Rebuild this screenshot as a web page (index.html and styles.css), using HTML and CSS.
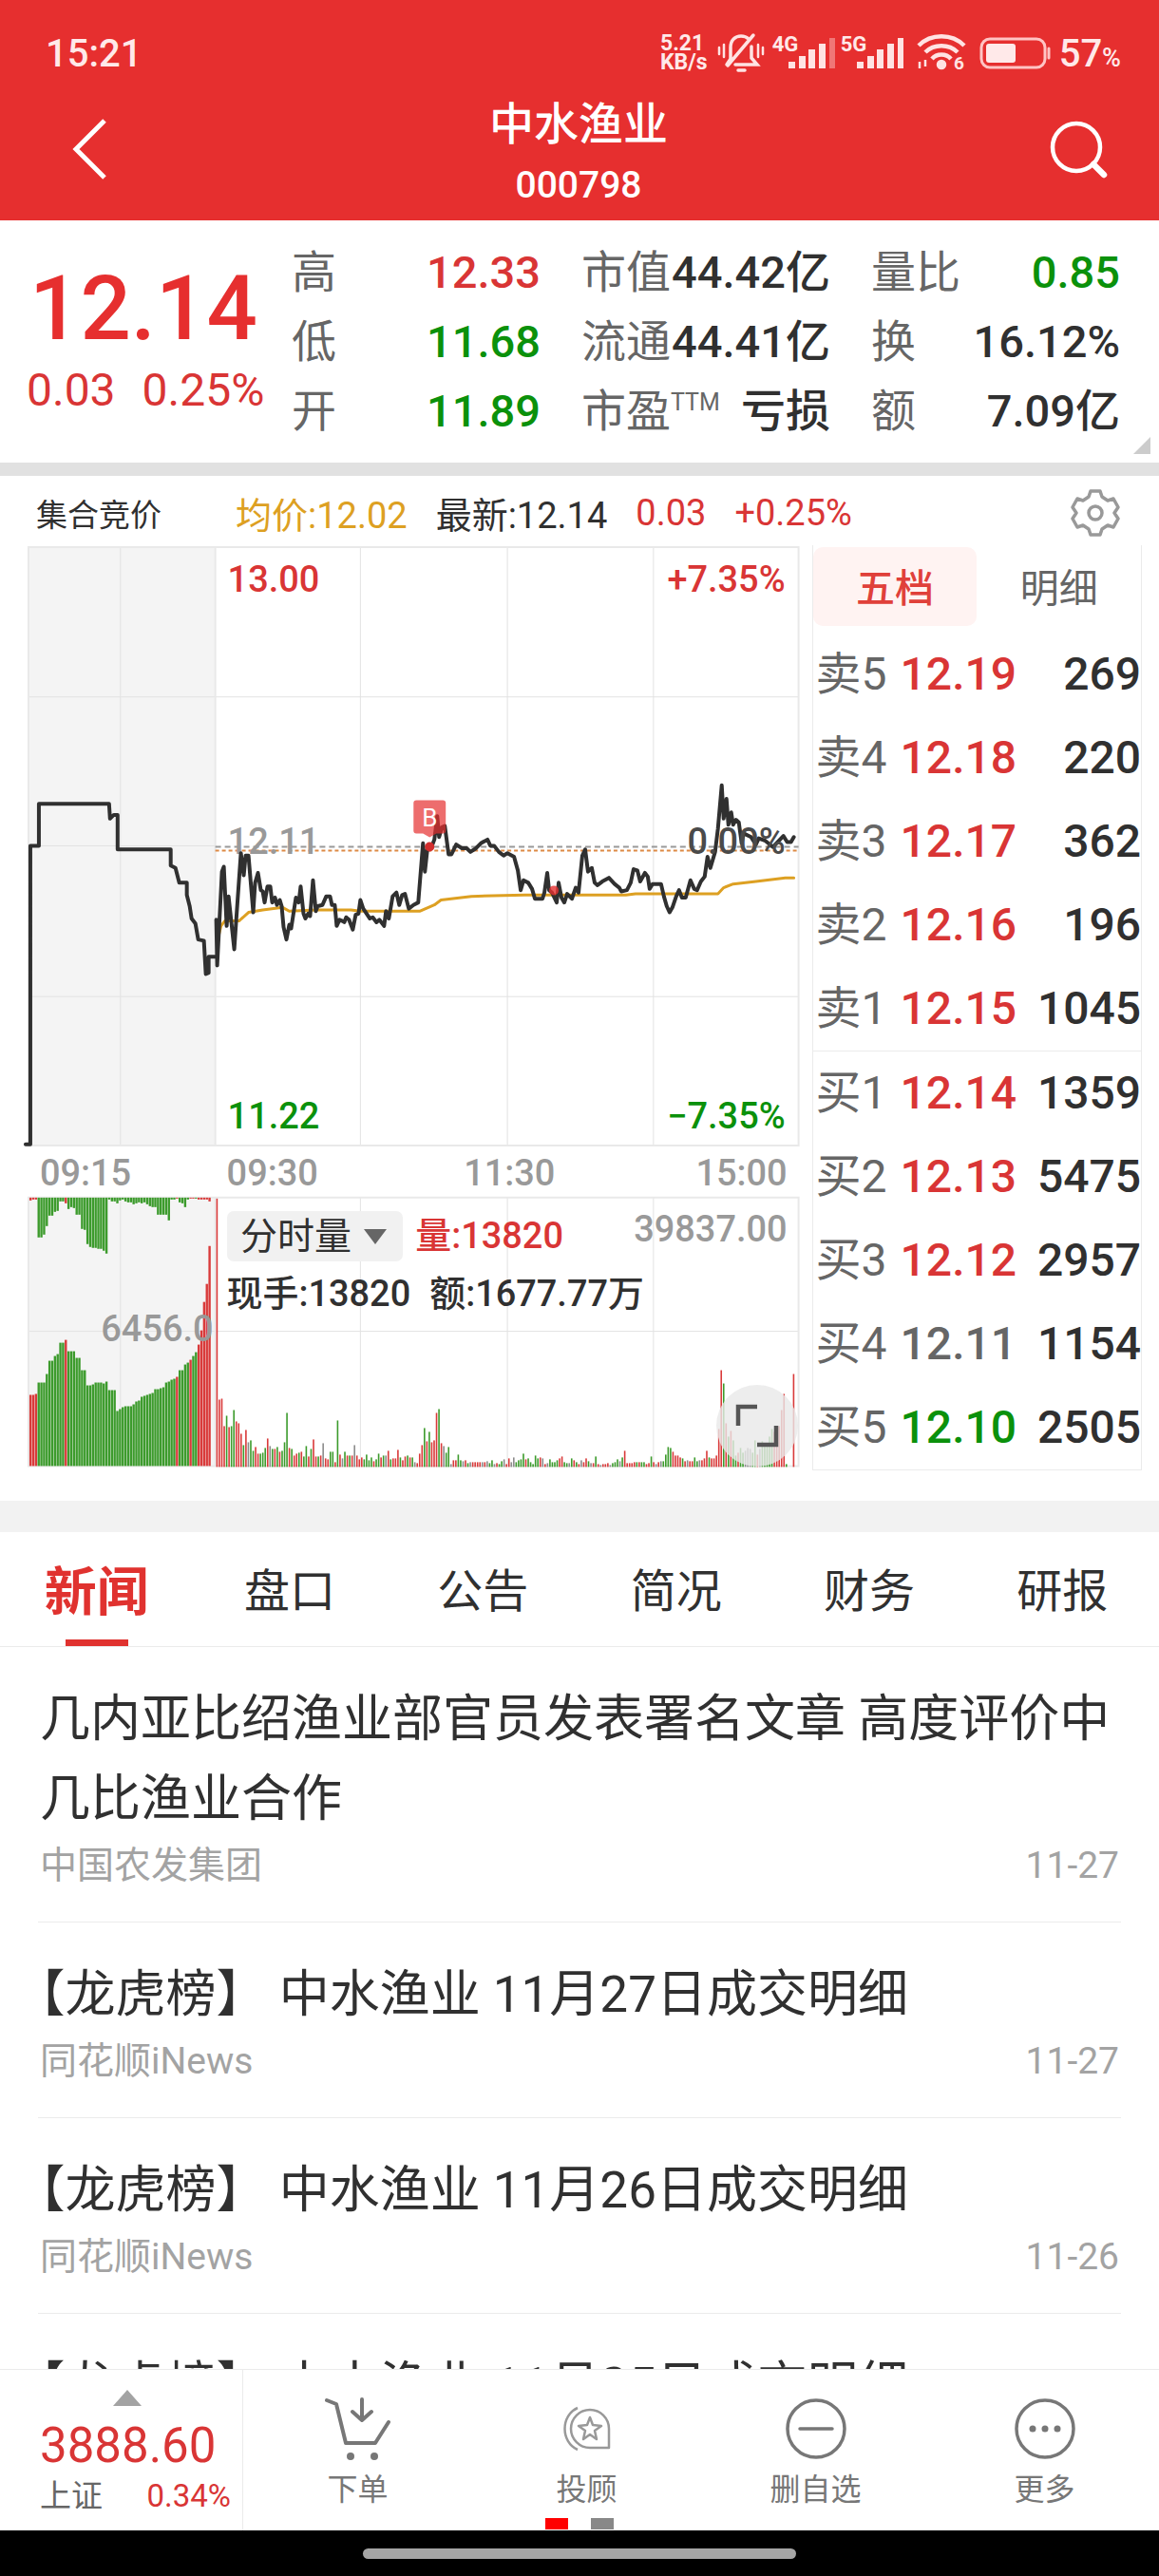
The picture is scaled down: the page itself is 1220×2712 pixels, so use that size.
FILE: index.html
```
<!DOCTYPE html>
<html lang="zh-CN">
<head>
  <meta charset="UTF-8">
  <meta name="viewport" content="width=device-width, initial-scale=1.0">
  <title>中水渔业 000798</title>
  <link rel="stylesheet" href="styles.css">
</head>
<body>
  <header class="topbar">
    <div class="status">
      <span class="clock">15:21</span>
      <div class="status-icons">
        <span class="speed">5.21<br>KB/s</span>
        <svg width="50" height="46" viewBox="0 0 50 46" fill="none" stroke="#ffe3e3" stroke-width="3.5" stroke-linecap="round">
          <path d="M10 35L14 29V17C14 9 19 5 25 5C28 5 31 6 33 8M36 16V28L42 35H19M22 41H29M38 4L11 36"/>
          <path d="M7 14V27M2 17V24M43 14V27M48 17V24" stroke-width="2.5"/>
        </svg>
        <div class="signal">
          <span>4G</span>
          <svg width="50" height="34" viewBox="0 0 50 34" fill="#ffe3e3">
            <rect x="0" y="26" width="7" height="7"/><rect x="11" y="20" width="7" height="13"/><rect x="21" y="13" width="7" height="20"/><rect x="32" y="7" width="7" height="26"/><rect x="43" y="1" width="6" height="32" opacity=".4"/>
          </svg>
        </div>
        <div class="signal">
          <span>5G</span>
          <svg width="50" height="34" viewBox="0 0 50 34" fill="#ffe3e3">
            <rect x="0" y="26" width="7" height="7"/><rect x="11" y="20" width="7" height="13"/><rect x="21" y="13" width="7" height="20"/><rect x="32" y="7" width="7" height="26"/><rect x="43" y="1" width="6" height="32"/>
          </svg>
        </div>
        <svg class="wifi" width="52" height="42" viewBox="0 0 52 42" fill="none" stroke="#ffe3e3" stroke-width="4.5">
          <path d="M2 13C15 0 37 0 50 13M9 20C18 11 34 11 43 20M16 27C21 21 31 21 36 27"/>
          <circle cx="26" cy="33" r="3" fill="#ffe3e3"/>
          <path d="M3 30V37M9 28V35" stroke-width="2.5"/>
          <text x="39" y="38" class="wifi-num">6</text>
        </svg>
        <svg class="battery" width="76" height="34" viewBox="0 0 76 34">
          <rect x="2" y="2" width="67" height="30" rx="9" fill="none" stroke="#ffc4c4" stroke-width="3"/>
          <rect x="7" y="7" width="31" height="20" rx="3" fill="#ffe9e9"/>
          <path d="M73 12V22" stroke="#ffc4c4" stroke-width="3" stroke-linecap="round"/>
        </svg>
        <span class="percent">57<small>%</small></span>
      </div>
    </div>
    <nav class="nav">
      <button class="nav-btn" aria-label="返回">
        <svg width="40" height="68" viewBox="0 0 40 68" fill="none" stroke="#fff" stroke-width="5"><path d="M35 4L5 34L35 64"/></svg>
      </button>
      <h1 class="stock">中水渔业<span>000798</span></h1>
      <button class="nav-btn right" aria-label="搜索">
        <svg width="64" height="64" viewBox="0 0 64 64" fill="none" stroke="#fff" stroke-width="4.5" stroke-linecap="round"><circle cx="30" cy="30" r="25"/><path d="M48 48L59 59" stroke-width="6.5"/></svg>
      </button>
    </nav>
  </header>

  <section class="quote">
    <div class="price">
      <div class="last">12.14</div>
      <div class="change"><span>0.03</span><span>0.25%</span></div>
    </div>
    <dl class="stats">
      <div><dt>高</dt><dd class="up">12.33</dd></div>
      <div><dt>市值</dt><dd>44.42亿</dd></div>
      <div><dt>量比</dt><dd class="down">0.85</dd></div>
      <div><dt>低</dt><dd class="down">11.68</dd></div>
      <div><dt>流通</dt><dd>44.41亿</dd></div>
      <div><dt>换</dt><dd>16.12%</dd></div>
      <div><dt>开</dt><dd class="down">11.89</dd></div>
      <div><dt>市盈<sup>TTM</sup></dt><dd>亏损</dd></div>
      <div><dt>额</dt><dd>7.09亿</dd></div>
    </dl>
    <i class="corner"></i>
  </section>

  <div class="legend">
    <span class="auction">集合竞价</span>
    <span class="avg">均价:12.02</span>
    <span>最新:12.14</span>
    <span class="up">0.03</span>
    <span class="up">+0.25%</span>
    <button class="gear" aria-label="设置">
      <svg width="52" height="52" viewBox="0 0 52 52" fill="none" stroke="#999" stroke-width="3.5" stroke-linejoin="round">
        <path d="M21 3H31L33 9L39 13L45 11L50 20L46 26L50 32L45 41L39 39L33 43L31 49H21L19 43L13 39L7 41L2 32L6 26L2 20L7 11L13 13L19 9Z"/>
        <circle cx="26" cy="26" r="7"/>
      </svg>
    </button>
  </div>

  <main class="board">
    <div class="chart">
      <svg viewBox="0 574 856 974">
        <!-- auction background -->
        <rect x="30" y="576" width="197" height="631" fill="#f4f4f4"/>
        <rect x="30" y="1262" width="197" height="283" fill="#f4f4f4"/>
        <!-- grid -->
        <path class="grid" d="M127 576V1207M380 576V1207M535 576V1207M689 576V1207M30 734H842M30 891H227M30 1050H842"/>
        <path class="grid" d="M127 1262V1545M380 1262V1545M535 1262V1545M689 1262V1545M30 1403H842"/>
        <path class="frame" d="M30 576H842V1207H30ZM227 576V1207M30 1262H842V1545H30ZM227 1262V1545"/>
        <path class="base" d="M227 892H842"/>
        <path class="base orange" d="M227 896H842"/>

        <text class="num mid" x="240" y="900">12.11</text>

        <g class="lines" transform="translate(0 -172) scale(1 1.301)">
          <polyline class="avg-line" points="229,895 233,882 237,878 252,878 262,871 277,869 298,867 305,870 333,869 370,869 380,870 443,870 458,865 465,861 497,858 553,857 660,857 670,856 757,856 763,851 773,848 797,846 828,843 837,843"/>
          <polyline points="27,1059 32,1059 32,817 41,817 41,783 115,783 116,795 120,792 124,792 124,820 180,820 180,833 185,835 189,847 197,847 197,857 200,866 202,876 206,880 209,893 215,894 217,921 220,920 220,907 227,907"/>
          <polyline points="228,877 229,914 234,838 236,834 239,882 241,858 247,901 249,878 254,823 257,841 259,825 262,825 267,871 269,847 272,839 275,853 277,854 279,863 282,850 285,850 287,863 290,859 292,865 295,861 297,866 299,883 302,893 305,881 307,884 312,859 315,863 317,850 320,872 322,876 325,872 327,874 330,845 333,870 335,866 340,865 344,858 348,858 350,865 353,865 355,882 358,877 361,878 363,879 365,875 368,877 372,885 375,873 378,872 380,861 383,868 390,876 393,875 397,879 400,877 405,882 407,870 410,876 414,858 418,855 421,865 424,857 427,856 431,868 436,865 441,863 446,815 448,838 451,817 455,818 458,812 461,793 463,810 466,802 469,801 473,824 476,824 481,816 487,819 492,819 496,822 502,819 507,815 514,812 517,817 521,817 526,822 531,825 535,823 542,826 546,837 549,853 552,845 557,847 561,852 564,860 568,860 572,860 574,855 577,839 579,853 582,855 587,863 589,847 592,859 595,863 598,856 603,860 607,851 610,855 614,825 617,820 620,838 624,835 627,847 630,849 635,846 642,843 648,848 653,851 655,854 661,853 665,847 668,836 672,837 675,846 680,839 683,842 685,852 688,848 697,848 700,858 703,866 706,871 709,867 713,858 716,853 719,859 723,859 728,845 732,852 735,853 739,846 743,842 746,826 749,835 754,822 757,803 761,768 763,795 766,779 768,800 771,790 773,800 776,796 779,798 782,815 784,807 792,810 797,816 800,811 807,813 815,818 820,814 826,809 830,814 834,814 837,810"/>
        </g>

        <!-- buy marker -->
        <path d="M439 843H467Q470 843 470 846V875Q470 878 467 878H460L453 882L446 878H439Q436 878 436 875V846Q436 843 439 843Z" fill="#e62f2f" fill-opacity=".7"/>
        <text class="buy" x="453" y="870">B</text>
        <circle cx="453" cy="892" r="5" fill="#d22e2e"/>
        <circle cx="584" cy="938" r="5" fill="#e62f2f" fill-opacity=".8"/>

        <text class="num red" x="240" y="623">13.00</text>
        <text class="num green" x="240" y="1189">11.22</text>
        <text class="num red end" x="828" y="623">+7.35%</text>
        <text class="num dark end" x="828" y="900">0.00%</text>
        <text class="num green end" x="828" y="1189">−7.35%</text>
        <text class="num" x="42" y="1249">09:15</text>
        <text class="num" x="239" y="1249">09:30</text>
        <text class="num" x="489" y="1249">11:30</text>
        <text class="num end" x="830" y="1249">15:00</text>

        <g id="auctionBars"></g>
        <g id="volumeBars"></g>

        <text class="num end" x="830" y="1308">39837.00</text>
        <text class="num end" x="225" y="1413">6456.0</text>
        <text class="num red" x="438" y="1315">量:13820</text>
        <text class="num black" x="239" y="1376">现手:13820</text>
        <text class="num black" x="453" y="1376">额:1677.77万</text>
      </svg>
      <div class="indicator">
        <select aria-label="指标"><option>分时量</option></select>
      </div>
      <button class="expand" aria-label="全屏">
        <svg width="48" height="48" viewBox="0 0 48 48" fill="none" stroke="#555" stroke-width="4.5"><path d="M4 24V4H24M44 24V44H24"/></svg>
      </button>
    </div>

    <div class="orders">
      <div class="order-tabs">
        <button class="active">五档</button>
        <button>明细</button>
      </div>
      <table>
        <tbody>
          <tr><th>卖5</th><td class="up">12.19</td><td>269</td></tr>
          <tr><th>卖4</th><td class="up">12.18</td><td>220</td></tr>
          <tr><th>卖3</th><td class="up">12.17</td><td>362</td></tr>
          <tr><th>卖2</th><td class="up">12.16</td><td>196</td></tr>
          <tr><th>卖1</th><td class="up">12.15</td><td>1045</td></tr>
        </tbody>
        <tbody class="bids">
          <tr><th>买1</th><td class="up">12.14</td><td>1359</td></tr>
          <tr><th>买2</th><td class="up">12.13</td><td>5475</td></tr>
          <tr><th>买3</th><td class="up">12.12</td><td>2957</td></tr>
          <tr><th>买4</th><td class="flat">12.11</td><td>1154</td></tr>
          <tr><th>买5</th><td class="down">12.10</td><td>2505</td></tr>
        </tbody>
      </table>
    </div>
  </main>

  <nav class="tabs">
    <a href="#" class="active">新闻</a>
    <a href="#">盘口</a>
    <a href="#">公告</a>
    <a href="#">简况</a>
    <a href="#">财务</a>
    <a href="#">研报</a>
  </nav>

  <section class="news">
    <article>
      <h2>几内亚比绍渔业部官员发表署名文章 高度评价中几比渔业合作</h2>
      <p><span>中国农发集团</span><time>11-27</time></p>
    </article>
    <article>
      <h2>【龙虎榜】 中水渔业 11月27日成交明细</h2>
      <p><span>同花顺iNews</span><time>11-27</time></p>
    </article>
    <article>
      <h2>【龙虎榜】 中水渔业 11月26日成交明细</h2>
      <p><span>同花顺iNews</span><time>11-26</time></p>
    </article>
    <article>
      <h2>【龙虎榜】 中水渔业 11月25日成交明细</h2>
    </article>
  </section>

  <footer class="toolbar">
    <div class="index">
      <i class="arrow"></i>
      <strong>3888.60</strong>
      <div><span>上证</span><span class="up">0.34%</span></div>
    </div>
    <button>
      <svg width="72" height="68" viewBox="0 0 72 68" fill="none" stroke="#777" stroke-width="4" stroke-linecap="round" stroke-linejoin="round">
        <path d="M3 4L13 8L23 49H54L68 27M40 3V25M30 16L40 25L50 16"/>
        <circle cx="28" cy="63" r="4" fill="#777" stroke="none"/><circle cx="53" cy="63" r="4" fill="#777" stroke="none"/>
      </svg>
      下单
    </button>
    <button>
      <svg width="72" height="68" viewBox="0 0 72 68" fill="none" stroke="#999" stroke-width="2.5" stroke-linejoin="round">
        <path d="M39 14C28 14 19 23 19 34S28 54 39 54H59V34C59 23 50 14 39 14Z"/>
        <path d="M26 12C8 20 8 48 26 56"/>
        <path d="M39 22L42 30L51 31L44 36L46 45L39 40L32 45L34 36L27 31L36 30Z"/>
      </svg>
      投顾
    </button>
    <button>
      <svg width="72" height="68" viewBox="0 0 72 68" fill="none" stroke="#777" stroke-width="3.5" stroke-linecap="round"><circle cx="36" cy="34" r="30"/><path d="M19 34H53"/></svg>
      删自选
    </button>
    <button>
      <svg width="72" height="68" viewBox="0 0 72 68" fill="#777"><circle cx="36" cy="34" r="30" fill="none" stroke="#777" stroke-width="3.5"/><circle cx="23" cy="34" r="3.5"/><circle cx="36" cy="34" r="3.5"/><circle cx="49" cy="34" r="3.5"/></svg>
      更多
    </button>
    <div class="pager"><i class="on"></i><i></i></div>
  </footer>
  <div class="gesture"><i></i></div>

  <script>
const SVG = "http://www.w3.org/2000/svg";
const COLORS = { r: "#d93a3a", g: "#3c9b2c", x: "#8c8c8c" };

function addBar(group, x, y, width, height, color) {
  const bar = document.createElementNS(SVG, "rect");
  bar.setAttribute("x", x);
  bar.setAttribute("y", y);
  bar.setAttribute("width", width);
  bar.setAttribute("height", height);
  bar.setAttribute("fill", color);
  group.appendChild(bar);
}

// call auction: matched volume grows up, unmatched volume hangs down
const matched = "r75 r75 r76 g88 g88 g88 g97 g111 g111 g116 g118 g130 g130 r133 g121 g121 g121 g114 g114 g101 g101 g85 g85 g86 g88 g88 g88 g87 g89 g80 g80 g80 g58 g60 g62 g63 g63 g63 g65 g68 g69 g73 g74 g75 g76 g77 g81 g81 g82 g83 g88 g89 g91 g92 r94 g101 g101 g107 g109 r112 g116 g120 r128 r143 r173 r192 r232";
const unmatched = "r3 r2 r2 g42 g42 g39 g30 g19 g19 g15 g14 g4 g4 r6 g12 g10 g11 g18 g18 g33 g34 g49 g52 g53 g53 g54 g54 g56 g59 g2 g4 g4 g6 g3 g2 g4 g5 g5 g7 g6 g5 g6 g5 g7 g9 g10 g10 g18 g18 g18 g18 g24 g2 g2 r1 g5 g6 g10 g2 r1 r1 g1 r2 r2 r2 r2 r4";
const auctionBars = document.getElementById("auctionBars");
matched.split(" ").forEach((item, i) => {
  const h = Number(item.slice(1));
  addBar(auctionBars, 31 + i * 2.86, 1545 - h, 2.4, h, COLORS[item[0]]);
});
unmatched.split(" ").forEach((item, i) => {
  addBar(auctionBars, 31 + i * 2.86, 1262, 2.4, Number(item.slice(1)), COLORS[item[0]]);
});

// minute volume, 09:30 - 15:00
const volume = "r283 r71 r72 r43 g54 r42 g43 g60 r48 r46 r35 g23 r39 x26 g28 g17 r21 r14 g14 g15 g20 r30 x22 g19 r19 g21 r16 g17 g26 g57 r20 g19 r12 r14 g15 r16 g11 g22 r11 g19 r29 r11 g11 r12 x25 r9 r8 g16 g16 r5 g49 r13 x9 g16 r12 g12 r12 x23 r12 r8 r10 g8 g13 g7 g10 r6 g8 g14 r10 g12 x12 r17 g8 r9 r9 r18 g10 r7 r11 g12 r10 g10 x5 r4 "
  + "r14 r23 g41 r27 g37 r26 r28 r57 g61 r25 x22 g15 g21 x3 r7 r7 g13 g7 x6 r7 g4 x5 r5 r5 r5 r5 x5 r5 x6 g4 g7 x3 r4 g3 g6 x8 r3 r9 x5 x10 g5 g7 g8 g14 r8 g9 g5 g3 g12 g9 r10 x9 r3 x4 g8 g5 g5 g7 r9 r11 g5 g4 x4 g9 r7 g5 r3 x7 r5 r9 g6 x4 r4 g11 r3 x2 r3 r3 r4 x2 g4 g5 g8 x6 g10 r17 r4 r4 r4 r5 g5 r5 g5 g5 r3 r4 g11 r5 x3 r5 x6 g6 g13 g21 g20 r16 r12 r12 r10 g9 r6 x7 r6 r6 g10 g6 x7 r7 r9 r17 g10 r9 r9 r12 r40 r102 g88 r46 g32 r38 g28 g12 r15 g20 g15 x17 x20 x19 g15 g28 r13 x19 g27 g23 g25 g32 g40 r37 r33 r43 r60 r77 g3 x0 x0 r98";
const volumeBars = document.getElementById("volumeBars");
const minutes = volume.trim().split(" ");
const step = (836 - 228) / (minutes.length - 1);
minutes.forEach((item, i) => {
  const h = Number(item.slice(1));
  addBar(volumeBars, 228 + i * step, 1546 - h, 1.6, h, COLORS[item[0]]);
});
  </script>
</body>
</html>
```
FILE: styles.css
```
* {
  box-sizing: border-box;
}

body {
  display: flex;
  flex-direction: column;
  height: 100vh;
  margin: 0;
  overflow: hidden;
  background: #fff;
  color: #303030;
  font-family: Roboto, "Noto Sans CJK SC", sans-serif;
}

h1, h2, p, dl, dt, dd {
  margin: 0;
  font-weight: 400;
}

button {
  border: none;
  padding: 0;
  background: none;
  font-family: inherit;
  color: inherit;
}

svg {
  display: block;
}

.up {
  color: #d93535;
}

.down {
  color: #0b910b;
}

.flat {
  color: #666;
}

/* header */
.topbar {
  background: #e62f2f;
  color: #fff;
  padding-bottom: 4px;
}

.status {
  display: flex;
  justify-content: space-between;
  align-items: center;
  height: 98px;
  padding: 14px 40px 0 48px;
  color: #ffe9e9;
}

.clock {
  font-size: 40px;
  font-weight: 500;
}

.status-icons {
  display: flex;
  align-items: center;
}

.speed {
  margin-right: 10px;
  font-size: 23px;
  font-weight: 700;
  line-height: 20px;
}

.signal {
  display: flex;
  position: relative;
  margin-left: 8px;
  padding-left: 17px;
}

.signal + .signal {
  margin-left: 5px;
}

.signal span {
  position: absolute;
  left: 0;
  top: -4px;
  font-size: 22px;
  font-weight: 700;
  line-height: 24px;
}

.wifi {
  margin-left: 13px;
}

.wifi-num {
  fill: #ffe3e3;
  stroke: none;
  font-size: 19px;
  font-weight: 700;
}

.battery {
  margin: 0 8px 0 14px;
}

.percent {
  font-size: 40px;
  font-weight: 500;
}

.percent small {
  font-size: 27px;
}

.nav {
  display: grid;
  grid-template-columns: 1fr auto 1fr;
  align-items: center;
  padding: 0 53px 0 75px;
}

.nav-btn {
  justify-self: start;
  padding-bottom: 12px;
}

.nav-btn.right {
  justify-self: end;
}

.stock {
  margin-right: 24px;
  text-align: center;
  font-size: 47px;
  font-weight: 500;
  line-height: 65px;
}

.stock span {
  display: block;
  font-size: 39px;
}

/* quote */
.quote {
  display: flex;
  position: relative;
  padding: 18px 41px 18px 28px;
  border-bottom: 14px solid #e1e1e1;
  color: #303030;
}

.price {
  flex: 0 0 279px;
  color: #d93535;
}

.last {
  color: #e62f2f;
  padding: 24px 0 0 3px;
  font-size: 94px;
  font-weight: 500;
  line-height: 102px;
}

.change {
  display: flex;
  gap: 28px;
  font-size: 48px;
  line-height: 70px;
}

.stats {
  display: grid;
  flex: 1;
  grid-template-columns: repeat(3, 1fr);
  column-gap: 43px;
  font-size: 47px;
  line-height: 73px;
}

.stats div {
  display: flex;
  justify-content: space-between;
  white-space: nowrap;
}

.stats dt {
  color: #666;
}

.stats dd {
  font-weight: 500;
}

.stats sup {
  font-size: 25px;
  line-height: 25px;
}

.corner {
  position: absolute;
  right: 9px;
  bottom: 9px;
  border-left: 18px solid transparent;
  border-bottom: 18px solid #ccc;
}

/* chart */
.legend {
  display: flex;
  align-items: center;
  gap: 30px;
  height: 73px;
  padding: 4px 41px 0 38px;
  font-size: 38px;
}

.legend .auction {
  width: 180px;
  font-size: 33px;
}

.legend .avg {
  color: #dda022;
}

.gear {
  margin-left: auto;
}

.board {
  display: flex;
  padding-right: 18px;
  padding-bottom: 32px;
  border-bottom: 33px solid #f2f2f2;
}

.chart {
  position: relative;
  flex: 856;
}

.chart > svg {
  width: 100%;
}

.grid {
  fill: none;
  stroke: #e2e2e2;
}

.frame {
  fill: none;
  stroke: #e9e9e9;
  stroke-width: 2;
}

.base {
  stroke: #999;
  stroke-width: 2;
  stroke-dasharray: 6 4;
}

.base.orange {
  stroke: #dd8a45;
  stroke-dasharray: 4 3;
}

.lines polyline {
  fill: none;
  stroke: #303030;
  stroke-width: 4;
  stroke-linejoin: round;
  stroke-linecap: round;
  vector-effect: non-scaling-stroke;
}

.lines .avg-line {
  stroke: #dda022;
  stroke-width: 3;
}

.num {
  fill: #999;
  font-size: 38px;
  font-weight: 500;
}

.num.end {
  text-anchor: end;
}

.num.red {
  fill: #d93535;
}

.num.green {
  fill: #0b910b;
}

.num.dark {
  fill: #4a4a4a;
}

.num.black {
  fill: #303030;
}

.buy {
  fill: #fff;
  font-size: 26px;
  text-anchor: middle;
}

.indicator {
  position: absolute;
  left: 239px;
  top: 701px;
}

.indicator select {
  appearance: none;
  width: 185px;
  height: 53px;
  padding: 0 0 0 14px;
  border: none;
  border-radius: 7px;
  background: #f1f1f1;
  color: #303030;
  font-family: inherit;
  font-size: 39px;
}

.indicator::after {
  content: "";
  position: absolute;
  right: 17px;
  top: 19px;
  border: 12px solid transparent;
  border-top: 16px solid #666;
  border-bottom: none;
}

.expand {
  position: absolute;
  right: 15px;
  bottom: 4px;
  width: 86px;
  height: 86px;
  border-radius: 50%;
  background: rgba(232, 232, 232, 0.8);
}

.expand svg {
  margin: auto;
}

/* order book */
.orders {
  flex: 346;
  border: 1px solid #ebebeb;
  border-top: none;
}

.order-tabs {
  display: flex;
  height: 92px;
  padding: 2px 0 7px;
}

.order-tabs button {
  flex: 1;
  padding-bottom: 4px;
  border-radius: 10px;
  color: #666;
  font-size: 41px;
}

.order-tabs .active {
  background: #fff3f2;
  color: #e0403a;
  font-weight: 500;
}

.orders table {
  width: 100%;
  border-collapse: collapse;
  font-size: 48px;
  line-height: 88px;
}

.orders th {
  width: 92px;
  padding: 0 0 0 3px;
  color: #666;
  font-weight: 400;
  text-align: left;
}

.orders td {
  padding: 0;
  font-weight: 500;
}

.orders td:last-child {
  text-align: right;
}

.bids {
  border-top: 1px solid #ebebeb;
}

/* news */
.tabs {
  display: flex;
  height: 121px;
  border-bottom: 1px solid #ebebeb;
}

.tabs a {
  display: flex;
  flex: 1;
  position: relative;
  align-items: center;
  justify-content: center;
  padding-bottom: 5px;
  color: #303030;
  font-size: 48px;
  text-decoration: none;
}

.tabs .active {
  color: #e0322f;
  font-size: 55px;
  font-weight: 700;
}

.tabs .active::after {
  content: "";
  position: absolute;
  left: calc(50% - 33px);
  bottom: 0;
  width: 66px;
  height: 7px;
  background: #e0322f;
}

.news {
  flex: 1;
  min-height: 0;
  overflow: hidden;
  padding: 0 40px;
}

.news article {
  padding: 34px 2px 31px;
  border-bottom: 1px solid #ebebeb;
}

.news h2 {
  font-size: 53px;
  line-height: 84px;
  text-spacing-trim: trim-start;
}

.news p {
  display: flex;
  justify-content: space-between;
  color: #a3a3a3;
  font-size: 39px;
  line-height: 56px;
}

/* bottom bar */
.toolbar {
  display: flex;
  position: relative;
  flex: none;
  height: 170px;
  border-top: 1px solid #ebebeb;
  background: #fff;
}

.index {
  width: 256px;
  padding: 21px 12px 0 42px;
  border-right: 1px solid #ebebeb;
  color: #d93535;
}

.index .arrow {
  display: block;
  width: 30px;
  margin-left: 77px;
  border: 15px solid transparent;
  border-bottom: 17px solid #a3a3a3;
  border-top: none;
}

.index strong {
  display: block;
  margin-top: 12px;
  font-size: 51px;
  font-weight: 400;
  line-height: 60px;
}

.index div {
  display: flex;
  justify-content: space-between;
  margin-top: 3px;
  color: #666;
  font-size: 33px;
  line-height: 40px;
}

.toolbar button {
  display: flex;
  flex: 1;
  flex-direction: column;
  align-items: center;
  padding-top: 28px;
  color: #777;
  font-size: 32px;
  line-height: 60px;
}

.pager {
  display: flex;
  gap: 24px;
  position: absolute;
  left: 0;
  right: 0;
  bottom: 1px;
  justify-content: center;
}

.pager i {
  width: 24px;
  height: 12px;
  background: #888;
}

.pager .on {
  background: #f00;
}

.gesture {
  flex: none;
  height: 48px;
  padding-top: 19px;
  background: #000;
}

.gesture i {
  display: block;
  width: 456px;
  height: 11px;
  margin: 0 auto;
  border-radius: 6px;
  background: #a5a5a5;
}
```
